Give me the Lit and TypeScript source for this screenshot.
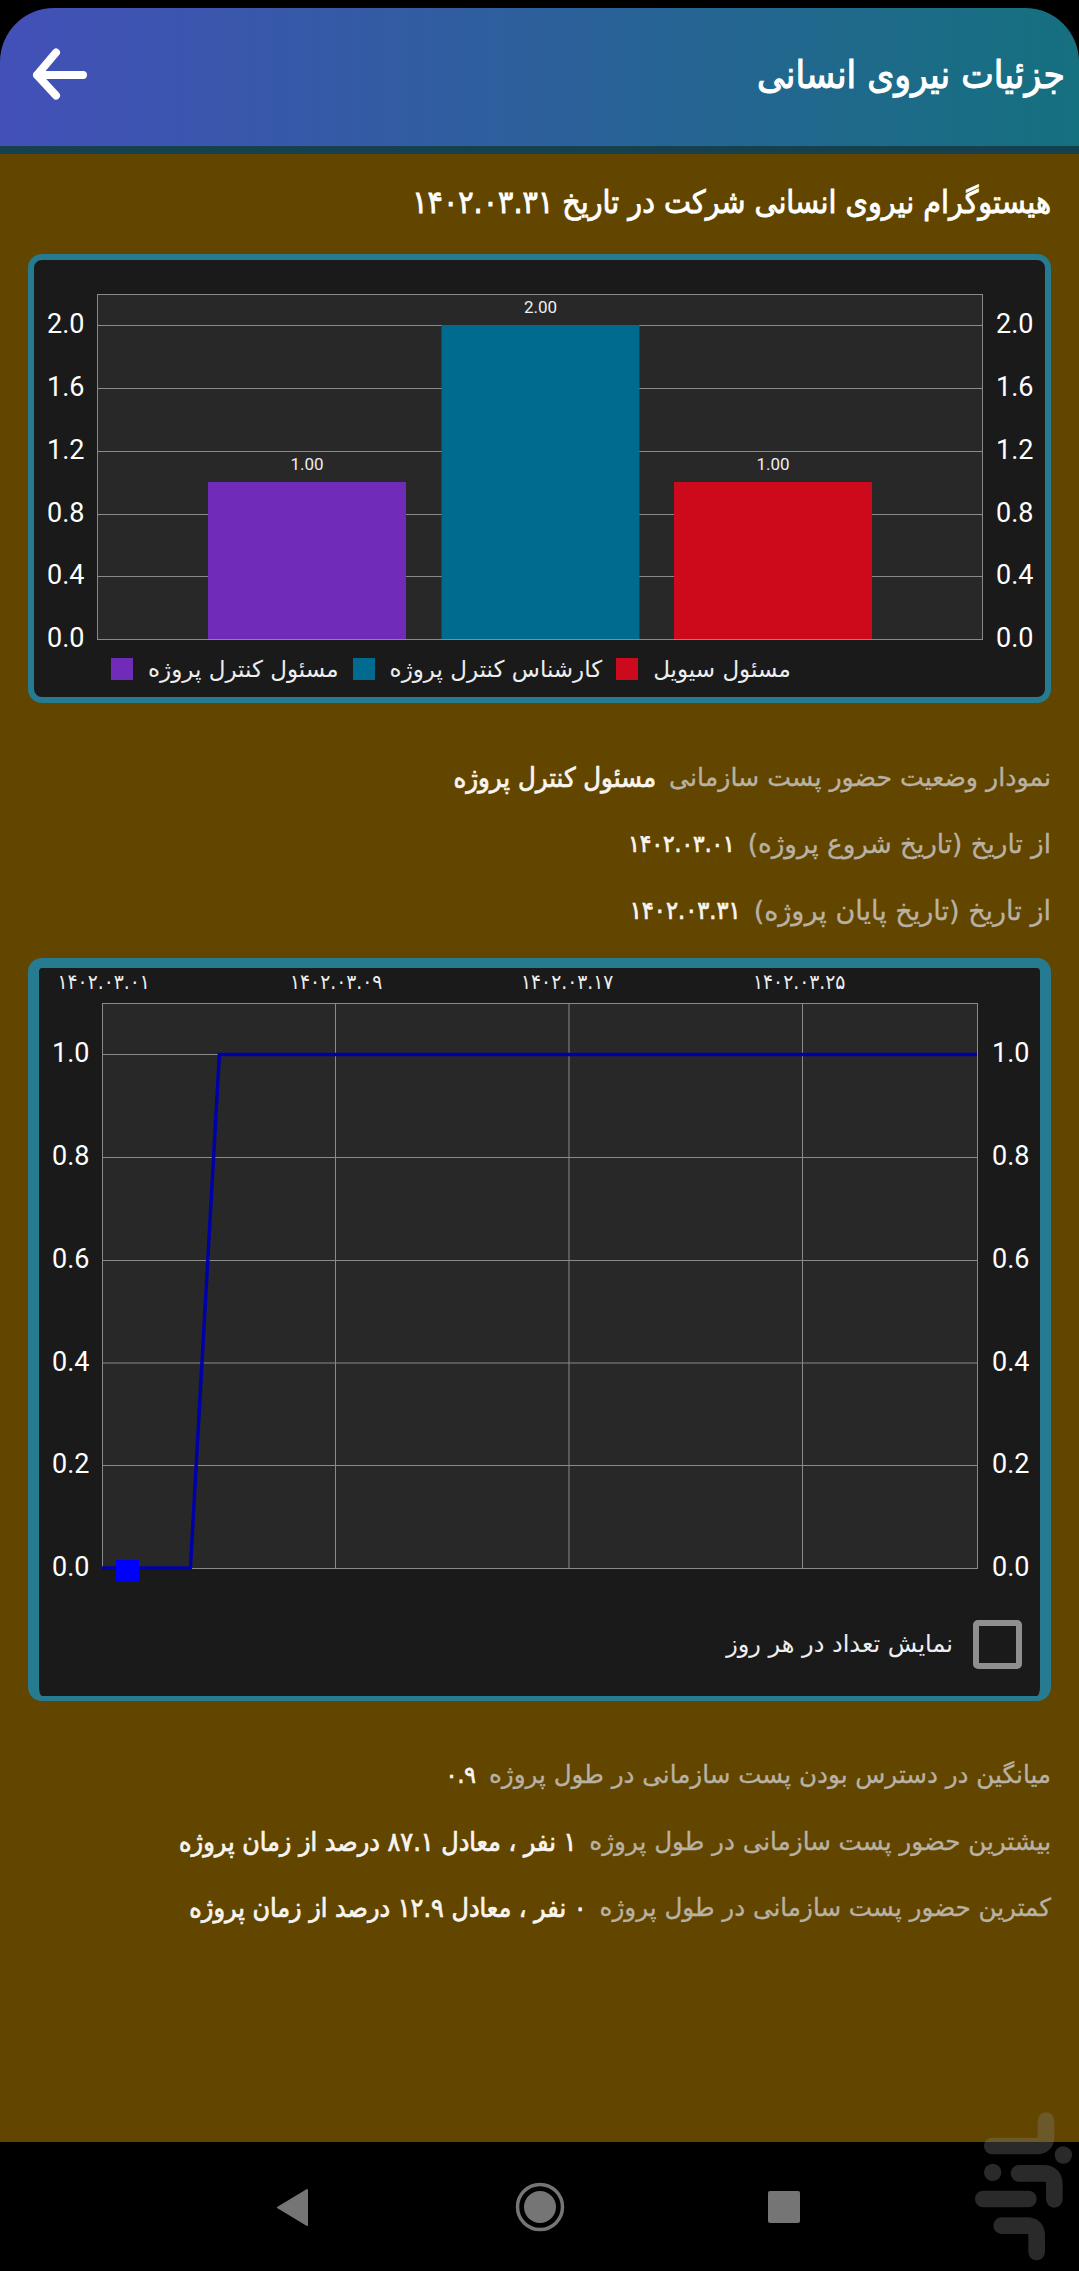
import { LitElement, css, html, svg, unsafeCSS } from 'lit'
import { customElement } from 'lit/decorators.js'

const AR = unsafeCSS(`"DejaVu Sans", sans-serif`)
const AR_NARROW = unsafeCSS(`"DejaVu Sans Condensed", "DejaVu Sans", sans-serif`)

const bars = [
  { label: 'مسئول کنترل پروژه', color: '#702bb8', x: 174, v: 1 },
  { label: 'کارشناس کنترل پروژه', color: '#006a8f', x: 407.5, v: 2 },
  { label: 'مسئول سیویل', color: '#cd0a1c', x: 640, v: 1 },
]

@customElement('app-root')
export class AppRoot extends LitElement {
  static styles = css`
    :host {
      display: flex;
      flex-direction: column;
      position: relative;
      height: 2271px;
      overflow: hidden;
      background: #000;
      font-family: ${AR};
    }
    .bar {
      flex: none;
      height: 138px;
      margin-top: 8px;
      border-bottom: 8px solid #15414f;
      border-radius: 54px 54px 0 0;
      background: linear-gradient(90deg, #4350b8, #15707f);
      display: flex;
      justify-content: space-between;
      align-items: flex-start;
      padding: 0 14px 0 30px;
    }
    .bar h1 {
      margin: 44px 0 0;
      font-family: ${AR_NARROW};
      font-weight: 400;
      font-size: 38.5px;
      line-height: 46px;
      color: #fff;
      -webkit-text-stroke: 1px #fff;
    }
    .bar svg { margin-top: 37px; }
    main {
      flex: 1;
      background: #624600;
      padding: 27px 28px 0 28px;
      display: flex;
      flex-direction: column;
      direction: rtl;
    }
    h2 {
      margin: 0;
      height: 73px;
      font-family: ${AR_NARROW};
      font-weight: 400;
      font-size: 31.8px;
      line-height: 42px;
      color: #fff;
      -webkit-text-stroke: 0.8px #fff;
    }
    .card {
      box-sizing: border-box;
      width: 1023px;
      background: #1a1a1a;
      border: 6px solid #267b90;
      border-radius: 14px;
      direction: ltr;
    }
    .card.one { height: 449px; }
    .card.two { height: 743px; border-width: 10px 11px 5px; margin-top: 14px; }
    .card svg { display: block; }
    text { font-family: Roboto, sans-serif; fill: #fff; }
    text.fa { font-family: ${AR_NARROW}; fill: #eee; }
    text.val { fill: #eee; }
    .legend {
      display: flex;
      align-items: center;
      height: 34px;
      gap: 14px;
      padding-left: 77px;
      color: #eee;
      font-size: 23px;
    }
    .legend i { width: 22px; height: 22px; flex: none; }
    .item { display: flex; align-items: center; gap: 15px; }
    .rows { display: flex; flex-direction: column; }
    .rows.a { margin-top: 41px; font-size: 26.2px; }
    .rows.b { margin-top: 41px; font-size: 24.6px; }
    .rows p {
      margin: 0;
      height: 66.5px;
      display: flex;
      align-items: center;
      gap: 13px;
      color: #b9b2a4;
      white-space: nowrap;
      -webkit-text-stroke: 0.3px #b9b2a4;
    }
    .rows p.tight { font-size: 25.2px; }
    .rows p.wide { font-size: 27px; }
    .rows b {
      font-family: ${AR_NARROW};
      font-weight: 400;
      font-size: 26.6px;
      color: #f8f5ee;
      -webkit-text-stroke: 0.7px #f8f5ee;
    }
    .rows p.tight b { font-size: 27.2px; }
    .rows b.num { font-size: 24px; }
    .rows p.wide b.num { font-size: 25px; }
    .check {
      display: flex;
      align-items: center;
      justify-content: flex-end;
      gap: 20px;
      padding: 12px 18px 0 0;
      color: #eee;
      font-size: 24px;
    }
    .box {
      box-sizing: border-box;
      width: 49px;
      height: 49px;
      border: 6px solid #8f8f8f;
      border-radius: 5px;
    }
    nav { flex: none; height: 129px; }
    nav svg { display: block; }
    .mark { position: absolute; right: 0; bottom: 0; }
  `

  barChart() {
    const lines = [65, 128, 191, 254, 316, 379]
    const labels = ['2.0', '1.6', '1.2', '0.8', '0.4', '0.0']
    return html`<svg width="1011" height="392" viewBox="0 0 1011 392">
      <rect x="63.5" y="34.5" width="885" height="345" fill="#282828" stroke="#8a8a8a"></rect>
      ${lines.map((y, i) => svg`
        <line x1="64" x2="948" y1=${y + 0.5} y2=${y + 0.5} stroke="#8a8a8a" stroke-width="1.2"></line>
        <text x="13" y=${y + 8} font-size="27">${labels[i]}</text>
        <text x="962" y=${y + 8} font-size="27">${labels[i]}</text>`)}
      ${bars.map((b) => {
        const top = b.v === 2 ? 65 : 222
        return svg`<rect x=${b.x} y=${top} width="198" height=${379 - top} fill=${b.color}></rect>
          <text class="val" x=${b.x + 99} y=${top - 12} font-size="17" text-anchor="middle">${b.v.toFixed(2)}</text>`
      })}
    </svg>`
  }

  lineChart() {
    const hs = [
      ['1.0', 86],
      ['0.8', 189],
      ['0.6', 292],
      ['0.4', 394.5],
      ['0.2', 497],
      ['0.0', 600],
    ] as const
    const dates = [
      ['۱۴۰۲.۰۳.۰۱', 18.5],
      ['۱۴۰۲.۰۳.۰۹', 251],
      ['۱۴۰۲.۰۳.۱۷', 482],
      ['۱۴۰۲.۰۳.۲۵', 714],
    ] as const
    return html`<svg width="1001" height="640" viewBox="0 0 1001 640">
      <rect x="63.5" y="35.5" width="875" height="565" fill="#282828" stroke="#8a8a8a"></rect>
      ${[296.5, 530, 763.5].map((x) => svg`<line x1=${x} x2=${x} y1="35" y2="600" stroke="#8a8a8a"></line>`)}
      ${hs.map(([t, y]) => svg`
        <line x1="64" x2="938" y1=${y + 0.5} y2=${y + 0.5} stroke="#8a8a8a"></line>
        <text x="13" y=${y + 8} font-size="27">${t}</text>
        <text x="953" y=${y + 8} font-size="27">${t}</text>`)}
      ${dates.map(([t, x]) => svg`<text class="fa" x=${x} y="21" font-size="20.8">${t}</text>`)}
      <polyline points="63,600 151.4,600 180.4,86.5 938,86.5" fill="none" stroke="#0000a8" stroke-width="3.5"></polyline>
      <rect x="77" y="592" width="23" height="22" fill="#0000ff"></rect>
    </svg>`
  }

  render() {
    return html`
      <header class="bar">
        <svg width="60" height="60" viewBox="0 0 60 60" fill="none" stroke="#fff" stroke-width="8" stroke-linecap="round" stroke-linejoin="round">
          <path d="M26 7.5 L7 30 L26 50.5 M7 30 H53"></path>
        </svg>
        <h1>جزئیات نیروی انسانی</h1>
      </header>
      <main>
        <h2>هیستوگرام نیروی انسانی شرکت در تاریخ ۱۴۰۲.۰۳.۳۱</h2>
        <section class="card one">
          ${this.barChart()}
          <div class="legend">
            ${bars.map(
              (b) => html`<div class="item"><i style="background:${b.color}"></i><span>${b.label}</span></div>`,
            )}
          </div>
        </section>
        <div class="rows a">
          <p class="tight"><span>نمودار وضعیت حضور پست سازمانی</span><b>مسئول کنترل پروژه</b></p>
          <p><span>از تاریخ (تاریخ شروع پروژه)</span><b class="num">۱۴۰۲.۰۳.۰۱</b></p>
          <p class="wide"><span>از تاریخ (تاریخ پایان پروژه)</span><b class="num">۱۴۰۲.۰۳.۳۱</b></p>
        </div>
        <section class="card two">
          ${this.lineChart()}
          <div class="check">
            <span dir="rtl">نمایش تعداد در هر روز</span>
            <div class="box"></div>
          </div>
        </section>
        <div class="rows b">
          <p><span>میانگین در دسترس بودن پست سازمانی در طول پروژه</span><b class="num">۰.۹</b></p>
          <p><span>بیشترین حضور پست سازمانی در طول پروژه</span><b>۱ نفر ، معادل ۸۷.۱ درصد از زمان پروژه</b></p>
          <p><span>کمترین حضور پست سازمانی در طول پروژه</span><b>۰ نفر ، معادل ۱۲.۹ درصد از زمان پروژه</b></p>
        </div>
      </main>
      <nav>
        <svg width="1079" height="129" viewBox="0 2142 1079 129">
          <path d="M307 2190 V2225 L278 2207.5 Z" fill="#757575" stroke="#757575" stroke-width="2" stroke-linejoin="round"></path>
          <circle cx="540" cy="2207" r="22.5" fill="none" stroke="#757575" stroke-width="3.5"></circle>
          <circle cx="540" cy="2207" r="16" fill="#757575"></circle>
          <rect x="768" y="2191" width="32" height="32" rx="2" fill="#757575"></rect>
        </svg>
      </nav>
      <svg class="mark" width="119" height="171" viewBox="0 0 357 513" fill="none" stroke="#808080" stroke-width="50" stroke-linecap="round" opacity="0.33">
        <path d="M258 62 V110 Q258 138 230 138 H97"></path>
        <path d="M177 220 H250 Q283 220 283 253 V298"></path>
        <path d="M70 297 H205"></path>
        <path d="M125 377 H200 Q230 377 230 407 V456"></path>
        <circle cx="310" cy="165" r="26" fill="#808080" stroke="none"></circle>
        <circle cx="98" cy="217" r="26" fill="#808080" stroke="none"></circle>
      </svg>
    `
  }
}
